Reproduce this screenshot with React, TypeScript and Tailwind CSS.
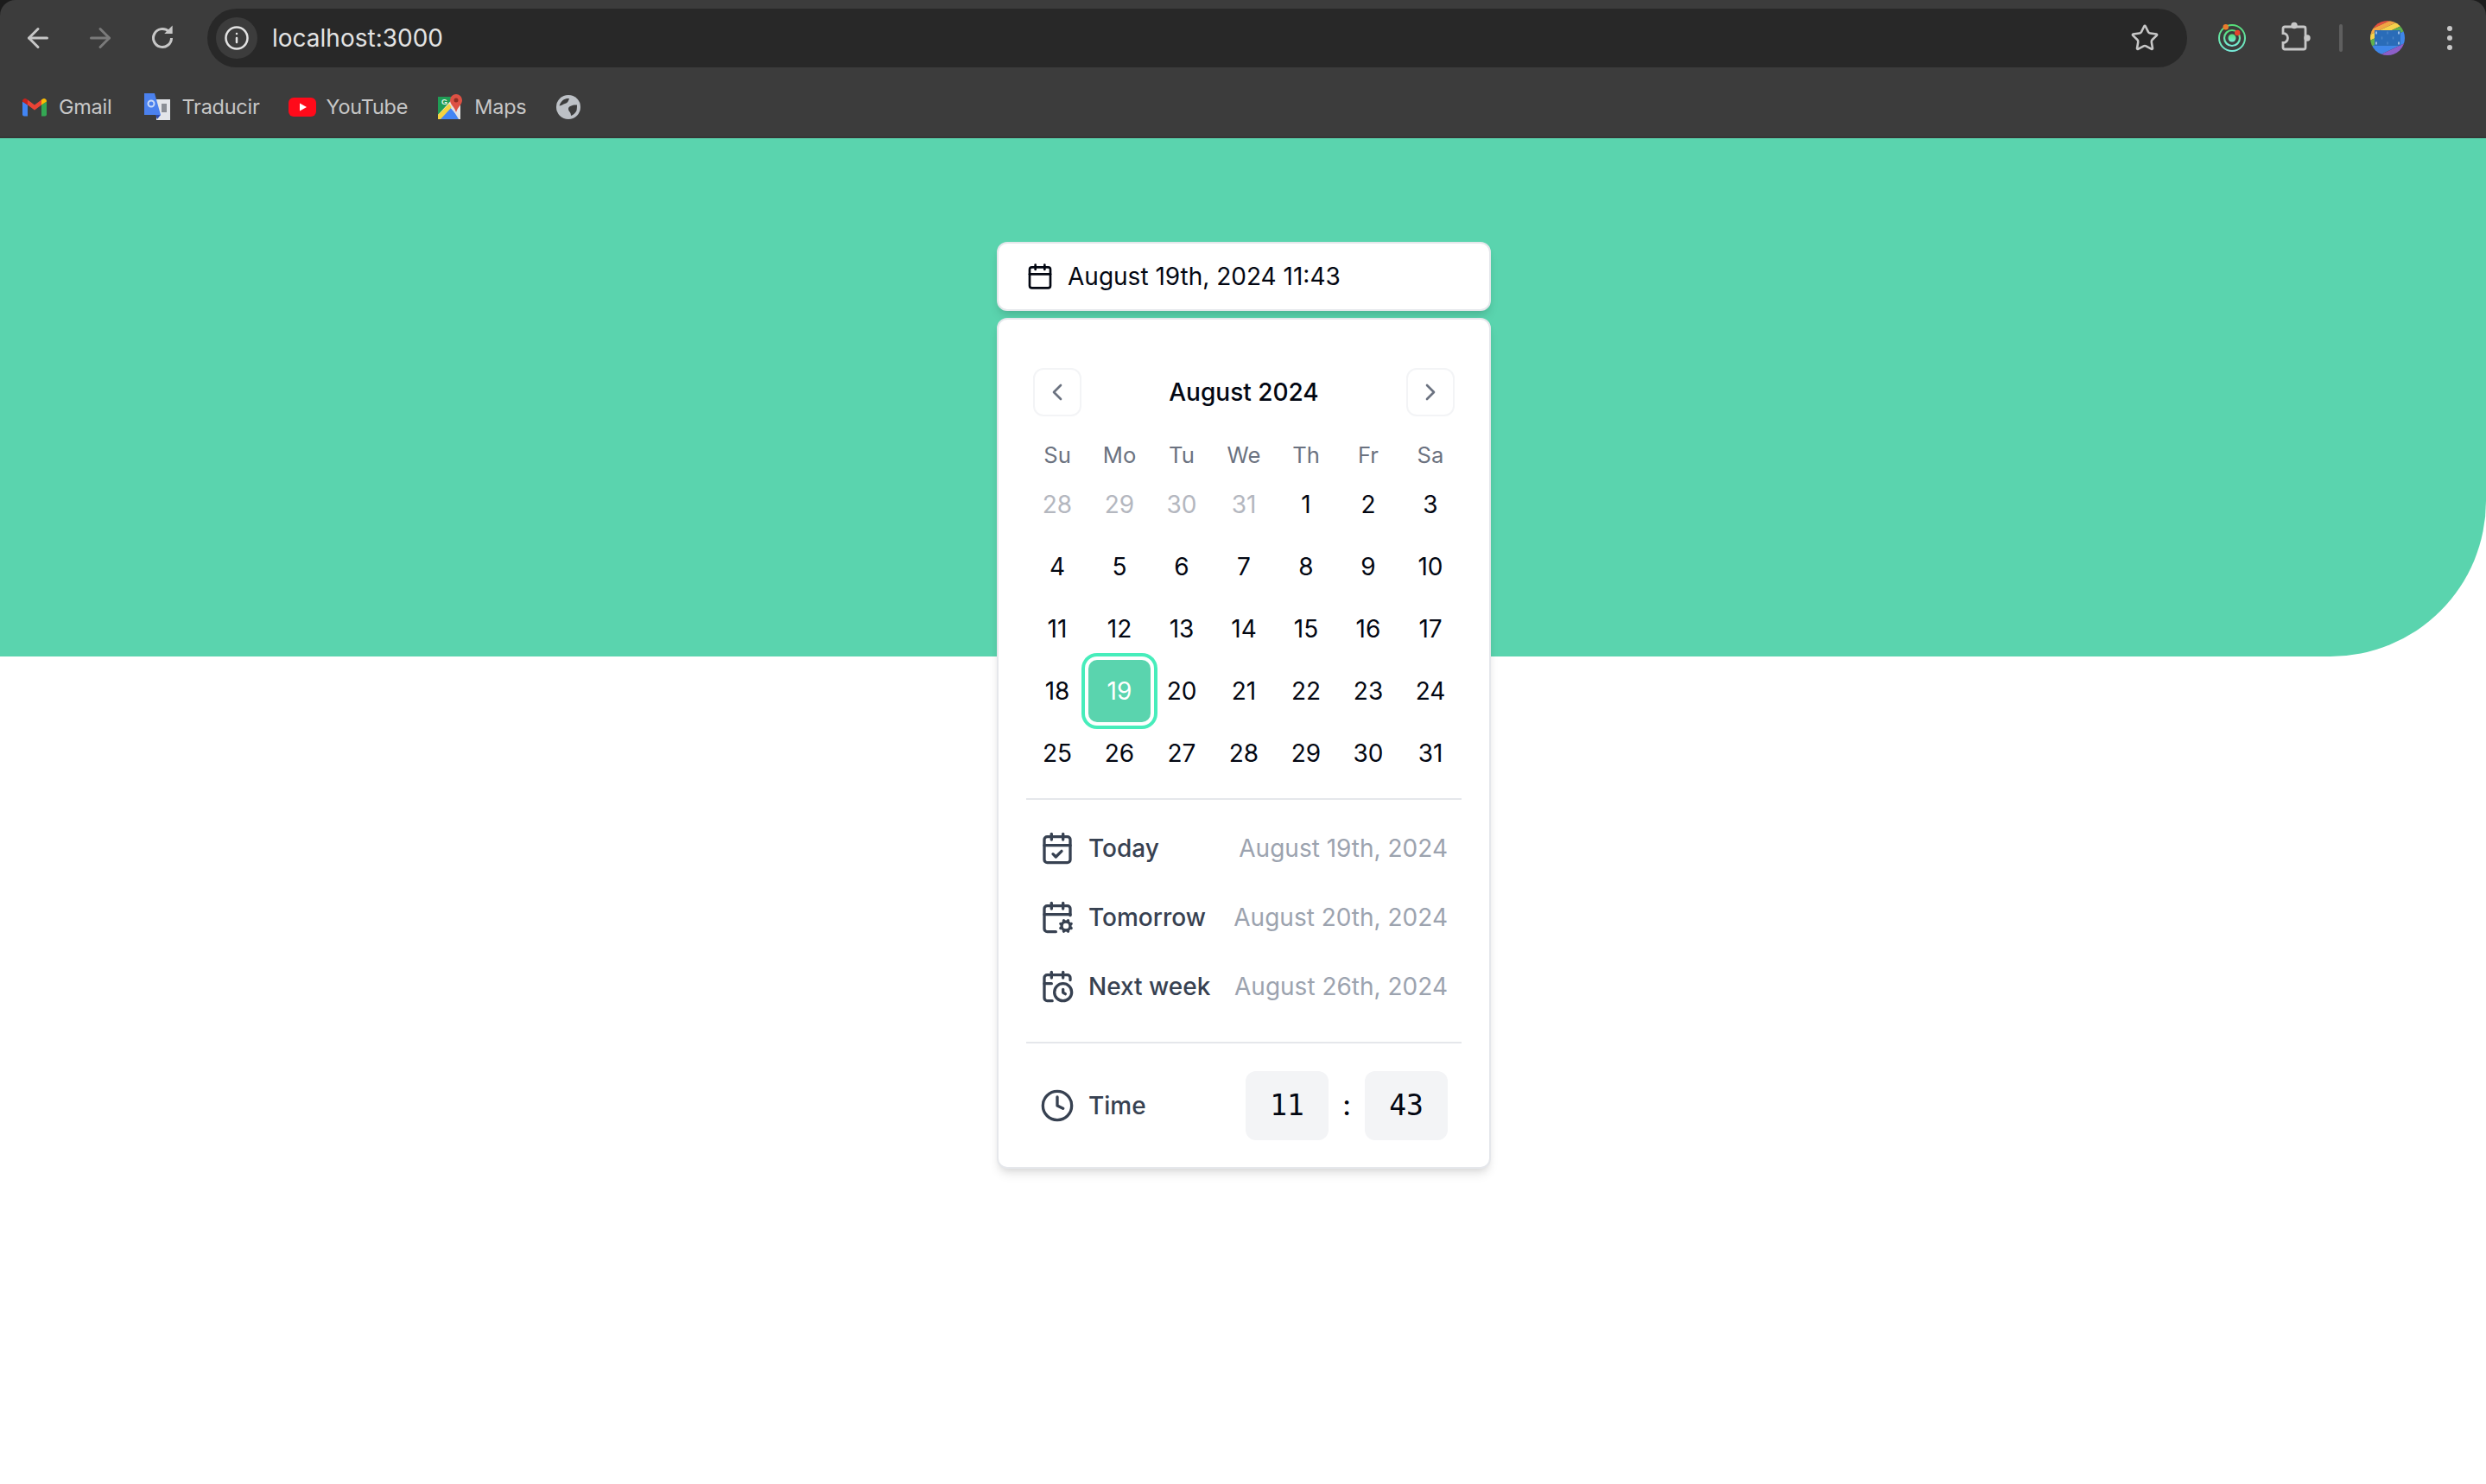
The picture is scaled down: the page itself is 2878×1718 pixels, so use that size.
import React from "react";
import {
  ArrowLeft,
  ArrowRight,
  Calendar,
  CalendarCheck,
  CalendarClock,
  CalendarCog,
  ChevronLeft,
  ChevronRight,
  Clock,
  Info,
  Star,
} from "lucide-react";

const weekdays = ["Su", "Mo", "Tu", "We", "Th", "Fr", "Sa"];
const dayRows = [
  ["28", "29", "30", "31", "1", "2", "3"],
  ["4", "5", "6", "7", "8", "9", "10"],
  ["11", "12", "13", "14", "15", "16", "17"],
  ["18", "19", "20", "21", "22", "23", "24"],
  ["25", "26", "27", "28", "29", "30", "31"],
];

function Reload() {
  return (
    <svg width="36" height="36" viewBox="0 0 24 24" fill="none" className="text-[#c7c7c7]">
      <path d="M19 12a7 7 0 1 1-2.2-5.1" stroke="currentColor" strokeWidth="2" />
      <polygon points="13.5 8.6 19.8 8.6 19.8 2.4" fill="currentColor" />
    </svg>
  );
}

function Orbit() {
  return (
    <svg width="36" height="36" viewBox="-18 -18 36 36" fill="none">
      <defs>
        <linearGradient id="orb" x1="0" y1="0" x2="0" y2="1">
          <stop offset="0" stopColor="#55dd77" />
          <stop offset="1" stopColor="#77ead8" />
        </linearGradient>
      </defs>
      <circle r="15" stroke="url(#orb)" strokeWidth="2" />
      <circle r="9" stroke="url(#orb)" strokeWidth="2.2" />
      <circle r="4.5" fill="url(#orb)" />
      <circle cx="-7.3" cy="-12.8" r="3.2" fill="#e97b2c" />
      <circle cx="6.2" cy="-6" r="3.2" fill="#e4452c" />
    </svg>
  );
}

function Puzzle() {
  return (
    <svg width="40" height="40" viewBox="-2 -2 40 40" fill="none" className="text-[#c7c7c7]">
      <path
        d="M7 5H29a2 2 0 0 1 2 2V29a2 2 0 0 1-2 2H7a2 2 0 0 1-2-2V23.500a5.500 5.500 0 0 0 0-11V7a2 2 0 0 1 2-2z"
        stroke="currentColor"
        strokeWidth="2.800"
      />
      <circle cx="18" cy="3.500" r="3.700" fill="currentColor" />
      <circle cx="33" cy="18" r="3.700" fill="currentColor" />
    </svg>
  );
}

function Avatar() {
  const cols = [-13, -6.500, 0, 6.500, 13];
  return (
    <svg width="40" height="40" viewBox="-20 -20 40 40">
      <defs>
        <clipPath id="av">
          <circle r="20" />
        </clipPath>
      </defs>
      <g clipPath="url(#av)">
        <g transform="rotate(-25)">
          <rect x="-30" y="-30" width="60" height="13" fill="#e8503f" />
          <rect x="-30" y="-17" width="60" height="5" fill="#f2a444" />
          <rect x="-30" y="-12" width="60" height="6" fill="#f6d14c" />
          <rect x="-30" y="-6" width="60" height="7" fill="#5fb04f" />
          <rect x="-30" y="1" width="60" height="13" fill="#3f86e8" />
          <rect x="-30" y="14" width="60" height="16" fill="#8d5fc9" />
        </g>
        <rect x="-15" y="-9" width="30" height="18" fill="#2a6cb8" />
        {[-6, 0, 6].map((y, i) =>
          cols.map((x, j) =>
            (i + j) % 2 === 0 ? <rect key={`${i}${j}`} x={x - 0.7} y={y - 1.500} width="1.400" height="3" fill={j % 4 === 0 || (i === 1 && j === 2) ? "#cfe0f2" : "#4c86c8"} /> : null
          )
        )}
      </g>
    </svg>
  );
}

function Gmail() {
  return (
    <svg width="32" height="24" viewBox="-2 -1.500 32 24">
      <path d="M0 4V19a2 2 0 0 0 2 2H6V8z" fill="#4285f4" />
      <path d="M28 4V19a2 2 0 0 1-2 2H22V8z" fill="#34a853" />
      <path d="M6 8L14 14L22 8V2L14 8L6 2z" fill="#ea4335" />
      <path d="M6 2L4.500 1A3 3 0 0 0 0 3.500V4L6 8z" fill="#c5221f" />
      <path d="M22 2L23.500 1A3 3 0 0 1 28 3.500V4L22 8z" fill="#fbbc04" />
    </svg>
  );
}

function Translate() {
  return (
    <svg width="32" height="32" viewBox="0 0 32 32">
      <rect x="15" y="7" width="16" height="24" fill="#e3e6ea" />
      <rect x="21" y="12" width="6" height="10" fill="#8a8f96" />
      <polygon points="14,25 20,25 16,30" fill="#2b4bb0" />
      <polygon points="1,0 13,0 20,25 1,25" fill="#4b81ee" />
      <circle cx="9" cy="12" r="3.500" fill="none" stroke="#c8daf9" strokeWidth="2" />
    </svg>
  );
}

function YouTube() {
  return (
    <svg width="32" height="22" viewBox="0 0 32 22">
      <rect width="32" height="22" rx="6" fill="#ff0a1a" />
      <polygon points="13,6.500 21,11 13,15.500" fill="#fff" />
    </svg>
  );
}

function Maps() {
  return (
    <svg width="32" height="30" viewBox="0 0 32 30">
      <rect x="2" y="3" width="26" height="26" fill="#e8e8e8" />
      <polygon points="2,3 21,3 2,24" fill="#1f9d55" />
      <polygon points="2,29 15,14 28,29" fill="#4285f4" />
      <polygon points="2,24 15,11 19,14 5,29 2,29" fill="#f5d340" />
      <polygon points="15,11 19,14 28,25 28,29 26,29" fill="#e3e3e3" />
      <text x="6" y="12" fontSize="9" fontWeight="700" fill="#e9f6ee" fontFamily="Liberation Sans, sans-serif">G</text>
      <path d="M23 0a7 7 0 0 1 7 7c0 5-5 7.500-7 14-2-6.500-7-9-7-14a7 7 0 0 1 7-7z" fill="#dd5144" />
      <circle cx="23" cy="7" r="2.500" fill="#8c2f25" />
    </svg>
  );
}

function Globe() {
  return (
    <svg width="32" height="32" viewBox="-2 -2 32 32" fill="none">
      <circle cx="14" cy="14" r="14" fill="#bdc1c6" />
      <path d="M15 4C11 3.500 6 5 3.500 12.500C7 12 8 10.500 10 10C13 9.500 14 7 15 4z" fill="#3c3c3c" />
      <path d="M24 11.500C20 11 14 12.500 14 16C14 19 17 19.500 17 24C20 23 22.500 20.500 23.500 18C24 15 24 13 24 11.500z" fill="#3c3c3c" />
    </svg>
  );
}

function Bookmark({ icon, label, className }: { icon: React.ReactNode; label: string; className?: string }) {
  return (
    <div className={`flex items-center gap-3 ${className ?? ""}`}>
      <div className="flex h-8 w-8 items-center justify-center">{icon}</div>
      <span className="text-[23.5px] leading-8 tracking-[-0.25px] text-[#c7c7c7]">{label}</span>
    </div>
  );
}

function Shortcut({ icon, label, date }: { icon: React.ReactNode; label: string; date: string }) {
  return (
    <div className="flex h-20 items-center justify-between px-4">
      <div className="flex items-center gap-4 font-medium text-[#374151]">
        {icon}
        <span>{label}</span>
      </div>
      <span className="text-[#9ca3af]">{date}</span>
    </div>
  );
}

export default function App() {
  return (
    <div className="min-h-screen bg-white font-['Inter',sans-serif] text-[28px] leading-10 text-[#030712]">
      <div className="bg-[#1c1c1c]">
        <header className="h-[160px] rounded-t-[18px] border-b-2 border-[#363636] bg-[#3c3c3c]">
          <div className="flex h-[88px] items-center pl-2">
            <div className="flex h-[72px] w-[72px] items-center justify-center text-[#c7c7c7]">
              <ArrowLeft size={36} />
            </div>
            <div className="flex h-[72px] w-[72px] items-center justify-center text-[#7a7a7a]">
              <ArrowRight size={36} />
            </div>
            <div className="flex h-[72px] w-[72px] items-center justify-center">
              <Reload />
            </div>
            <div className="ml-4 flex h-[68px] flex-1 items-center rounded-full bg-[#282828] pl-[10px] pr-8">
              <div className="flex h-12 w-12 items-center justify-center rounded-full bg-[#3c3c3c] text-[#e3e3e3]">
                <Info size={30} />
              </div>
              <span className="ml-[17px] flex-1 text-[#e3e3e3]">localhost:3000</span>
              <Star size={34} strokeWidth={1.800} className="text-[#c7c7c7]" />
            </div>
            <div className="flex w-[346px] items-center pl-4">
              <div className="flex h-[72px] w-[72px] items-center justify-center">
                <Orbit />
              </div>
              <div className="flex h-[72px] w-[72px] items-center justify-center">
                <Puzzle />
              </div>
              <div className="ml-4 h-8 w-1 rounded-full bg-[#5f5f5f]" />
              <div className="ml-8 h-10 w-10">
                <Avatar />
              </div>
              <div className="ml-4 flex h-[72px] w-[72px] flex-col items-center justify-center gap-[5px]">
                <div className="h-[6px] w-[6px] rounded-full bg-[#c7c7c7]" />
                <div className="h-[6px] w-[6px] rounded-full bg-[#c7c7c7]" />
                <div className="h-[6px] w-[6px] rounded-full bg-[#c7c7c7]" />
              </div>
            </div>
          </div>
          <nav className="flex h-[70px] items-center gap-[33px] pl-6 pt-[1px]">
            <Bookmark icon={<Gmail />} label="Gmail" />
            <Bookmark icon={<Translate />} label="Traducir" className="ml-[4px]" />
            <Bookmark icon={<YouTube />} label="YouTube" />
            <Bookmark icon={<Maps />} label="Maps" />
            <div className="flex h-8 w-8 items-center justify-center">
              <Globe />
            </div>
          </nav>
        </header>
      </div>

      <section className="flex h-[600px] justify-center rounded-br-[180px] bg-[#5ad4ae] pl-[2px] pt-[120px]">
        <div className="relative h-20 w-[572px]">
          <button className="flex h-20 w-full items-center gap-4 rounded-[12px] border-2 border-[#e5e7eb] bg-white px-8 text-left shadow-[0_8px_12px_-2px_rgba(0,0,0,0.1),0_4px_8px_-4px_rgba(0,0,0,0.1)]">
            <Calendar size={32} />
            <span>August 19th, 2024 11:43</span>
          </button>

          <div className="absolute left-0 top-[88px] h-[985px] w-[572px] rounded-[12px] border-2 border-[#e5e7eb] bg-white px-8 pt-[56px] shadow-[0_8px_12px_-2px_rgba(0,0,0,0.1),0_4px_8px_-4px_rgba(0,0,0,0.1)]">
            <div className="relative flex h-14 items-center justify-center px-2 font-medium">
              <div className="absolute left-2 flex h-14 w-14 items-center justify-center rounded-[12px] border-2 border-[#f3f4f6] text-[#6b7280]">
                <ChevronLeft size={32} />
              </div>
              <span>August 2024</span>
              <div className="absolute right-2 flex h-14 w-14 items-center justify-center rounded-[12px] border-2 border-[#f3f4f6] text-[#6b7280]">
                <ChevronRight size={32} />
              </div>
            </div>

            <div className="mb-px mt-[25px] grid grid-cols-7">
              {weekdays.map((d) => (
                <div key={d} className="flex h-10 items-center justify-center text-[25.6px] text-[#6b7280]">
                  {d}
                </div>
              ))}
            </div>

            <div>
              {dayRows.map((row, r) => (
                <div key={r} className="grid grid-cols-7">
                  {row.map((d, c) => {
                    const outside = r === 0 && c < 4;
                    const selected = r === 3 && c === 1;
                    return (
                      <div key={c} className="flex h-[72px] items-center justify-center">
                        {selected ? (
                          <div className="flex h-[72px] w-[72px] items-center justify-center rounded-[10px] bg-[#5ad4ae] text-white ring-4 ring-[#47edbb] ring-offset-4">
                            {d}
                          </div>
                        ) : (
                          <span className={outside ? "text-[#b4b7bf]" : ""}>{d}</span>
                        )}
                      </div>
                    );
                  })}
                </div>
              ))}
            </div>

            <div className="mt-4 h-[2px] bg-[#e5e7eb]" />

            <div className="pt-4">
              <Shortcut icon={<CalendarCheck size={40} />} label="Today" date="August 19th, 2024" />
              <Shortcut icon={<CalendarCog size={40} />} label="Tomorrow" date="August 20th, 2024" />
              <Shortcut icon={<CalendarClock size={40} />} label="Next week" date="August 26th, 2024" />
            </div>

            <div className="mt-6 h-[2px] bg-[#e5e7eb]" />

            <div className="flex items-center justify-between px-4 pt-8">
              <div className="flex items-center gap-4 font-medium text-[#374151]">
                <Clock size={40} />
                <span>Time</span>
              </div>
              <div className="flex items-center">
                <div className="flex h-20 w-24 items-center justify-center rounded-[12px] bg-[#f3f4f6] font-['DejaVu_Sans_Mono',monospace] text-[33px]">
                  11
                </div>
                <span className="w-[42px] text-center text-[32px] font-medium">:</span>
                <div className="flex h-20 w-24 items-center justify-center rounded-[12px] bg-[#f3f4f6] font-['DejaVu_Sans_Mono',monospace] text-[33px]">
                  43
                </div>
              </div>
            </div>
          </div>
        </div>
      </section>
    </div>
  );
}
